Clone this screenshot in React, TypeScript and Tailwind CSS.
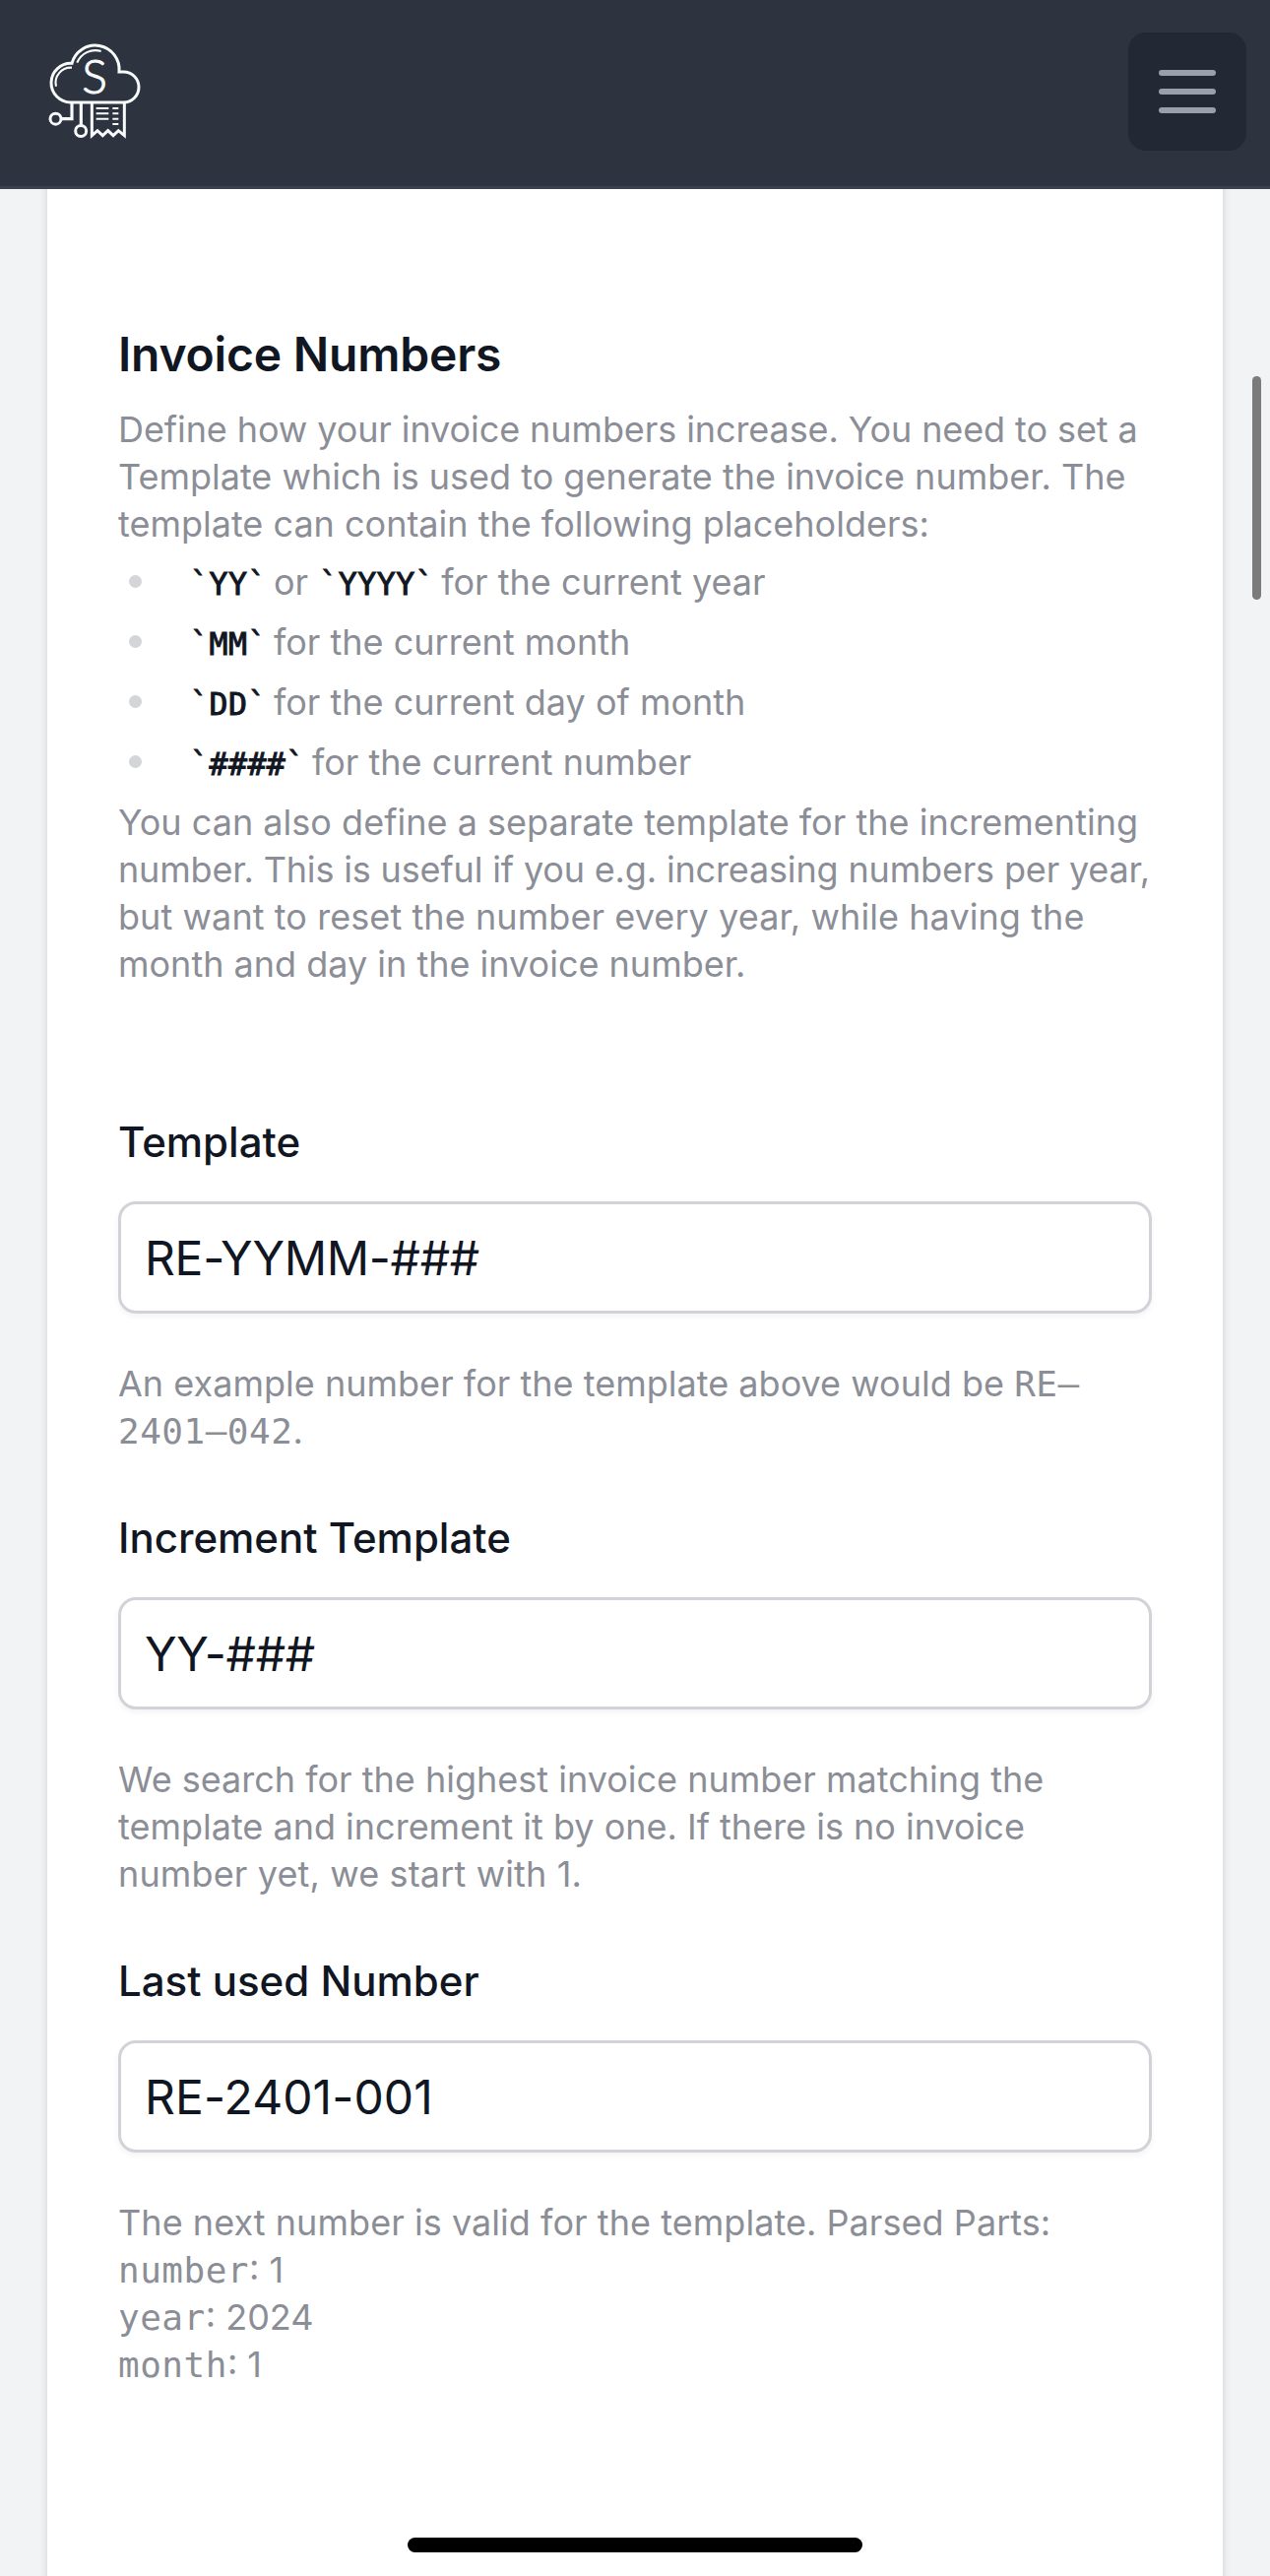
import type { ReactNode } from "react";

function Logo() {
  return (
    <svg width="104" height="104" viewBox="0 0 312 312" fill="none" stroke="#f8fafb" strokeWidth="9">
      <path d="M81 192A59.55 59.55 0 1 1 84 73A73.4 73.4 0 0 1 228 99H241.5A46.5 46.5 0 0 1 241.5 192Z" />
      <path d="M100 71A60 60 0 0 1 173 36M36 143A46 46 0 0 1 84 86" strokeWidth="6.5" />
      <path d="M84 192V242H53M112 192V260" strokeWidth="9.5" />
      <circle cx="34.5" cy="242" r="16.5" />
      <circle cx="111.5" cy="279" r="16.5" />
      <path d="M145 192V293L162 278L178 293L194 278L210 293L226 278L244 293V192" />
      <path d="M158 210H196M158 226H196M158 242H196M208 210H226M208 226H226M208 242H226M208 258H226" strokeWidth="6" />
      <text
        x="153"
        y="164"
        textAnchor="middle"
        fill="#f8fafb"
        strokeWidth="3"
        className="font-['Lato'] text-[144px] font-light"
      >
        S
      </text>
    </svg>
  );
}

function Mono({ children }: { children: ReactNode }) {
  return (
    <span className="font-['DejaVu_Sans_Mono',monospace] leading-none tracking-[0.5px]">{children}</span>
  );
}

function Code({ children }: { children: ReactNode }) {
  return (
    <code className="-mr-[3px] ml-px font-['DejaVu_Sans_Mono',monospace] text-[31.5px] leading-none tracking-[0.5px] text-[#111623] [-webkit-text-stroke:1px_#111623]">
      `{children}`
    </code>
  );
}

function Item({ children }: { children: ReactNode }) {
  return (
    <li className="flex h-[61px] items-center">
      <span className="mr-[48px] ml-[11px] size-[13px] shrink-0 rounded-full bg-[#d3d5d9]" />
      <span className="whitespace-nowrap">{children}</span>
    </li>
  );
}

function Field({
  label,
  value,
  valueClass = "tracking-normal",
  children,
}: {
  label: string;
  value: string;
  valueClass?: string;
  children: ReactNode;
}) {
  return (
    <div className="mb-[48px]">
      <label className="block text-[42px] leading-[74px] font-medium text-[#111623]">{label}</label>
      <input
        readOnly
        value={value}
        className={`mt-[23px] block h-[114px] w-full rounded-[18px] border-[3px] border-[#d1d3d8] bg-white px-[24px] text-[48px] text-[#111623] shadow-[0_3px_6px_rgba(0,0,0,0.05)] outline-none ${valueClass}`}
      />
      <div className="mt-[47px] whitespace-nowrap">{children}</div>
    </div>
  );
}

export default function App() {
  return (
    <div className="relative h-[2616px] w-[1290px] overflow-hidden bg-[#f2f3f5] font-['Inter',sans-serif] text-[36px] leading-[48px] text-[#8b8e96]">
      <header className="relative z-10 flex h-[192px] items-start justify-between border-b-[3px] border-[#3a404e] bg-[#2d343f] pr-[24px] pl-[45px]">
        <div className="mt-[40px]">
          <Logo />
        </div>
        <button className="mt-[33px] flex size-[120px] flex-col items-center justify-center gap-[13px] rounded-[18px] bg-[#222834]">
          <span className="h-[6px] w-[58px] rounded-full bg-[#9a9fac]" />
          <span className="h-[6px] w-[58px] rounded-full bg-[#9a9fac]" />
          <span className="h-[6px] w-[58px] rounded-full bg-[#9a9fac]" />
        </button>
      </header>

      <main className="relative mx-[48px] -mt-[12px] h-[2448px] bg-white px-[72px] pt-[144px] shadow-[0_3px_9px_rgba(0,0,0,0.1),0_3px_6px_rgba(0,0,0,0.06)]">
        <h2 className="text-[48px] leading-[72px] font-semibold tracking-[-0.2px] text-[#111623]">
          Invoice Numbers
        </h2>
        <div className="mt-[16px] whitespace-nowrap">
          <p className="tracking-[-0.09px]">Define how your invoice numbers increase. You need to set a</p>
          <p>Template which is used to generate the invoice number. The</p>
          <p>template can contain the following placeholders:</p>
        </div>
        <ul className="pt-[4px] pb-[7px]">
          <Item>
            <Code>YY</Code> or <Code>YYYY</Code> for the current year
          </Item>
          <Item>
            <Code>MM</Code> for the current month
          </Item>
          <Item>
            <Code>DD</Code> for the current day of month
          </Item>
          <Item>
            <Code>####</Code> for the current number
          </Item>
        </ul>
        <div className="mb-[120px] whitespace-nowrap">
          <p className="tracking-[0.02px]">You can also define a separate template for the incrementing</p>
          <p className="tracking-[-0.16px]">number. This is useful if you e.g. increasing numbers per year,</p>
          <p className="tracking-[0.08px]">but want to reset the number every year, while having the</p>
          <p>month and day in the invoice number.</p>
        </div>

        <Field label="Template" value="RE-YYMM-###" valueClass="tracking-[-0.3px]">
          <p className="tracking-[0.02px]">
            An example number for the template above would be <Mono>RE–</Mono>
          </p>
          <p>
            <Mono>2401–042</Mono>.
          </p>
        </Field>
        <Field label="Increment Template" value="YY-###" valueClass="tracking-[-0.3px]">
          <p>We search for the highest invoice number matching the</p>
          <p>template and increment it by one. If there is no invoice</p>
          <p className="tracking-[0.14px]">number yet, we start with 1.</p>
        </Field>
        <Field label="Last used Number" value="RE-2401-001" valueClass="tracking-[0.1px]">
          <p className="tracking-[0.05px]">The next number is valid for the template. Parsed Parts:</p>
          <p>
            <Mono>number</Mono>: 1
          </p>
          <p>
            <Mono>year</Mono>: 2024
          </p>
          <p>
            <Mono>month</Mono>: 1
          </p>
        </Field>
      </main>

      <div className="absolute top-[382px] right-[9px] z-20 h-[227px] w-[9px] rounded-full bg-[#7b7b7c]" />
      <div className="absolute bottom-[24px] left-1/2 z-20 h-[15px] w-[462px] -translate-x-1/2 rounded-full bg-black" />
    </div>
  );
}
